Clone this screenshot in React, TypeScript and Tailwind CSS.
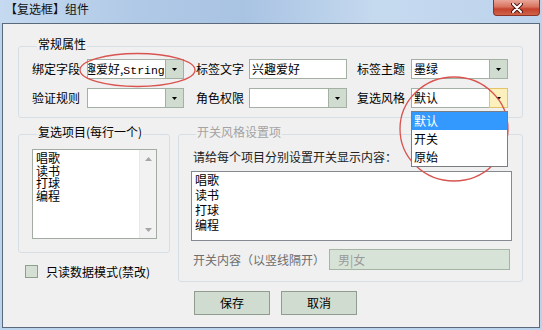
import type { ReactNode } from "react";

const cjk = "font-['Noto_Sans_CJK_SC',sans-serif]";

function DownArrow() {
  return (
    <svg width="5" height="3" viewBox="0 0 5 3">
      <path d="M0 0h5L2.5 3z" fill="#000" />
    </svg>
  );
}

function ScrollArrow({ up }: { up?: boolean }) {
  return (
    <svg width="7" height="4" viewBox="0 0 7 4">
      <path d={up ? "M0 4h7L3.5 0z" : "M0 0h7L3.5 4z"} fill="#a6a6a6" />
    </svg>
  );
}

function Combo({
  value,
  width = "w-[97px]",
  hot,
  children,
}: {
  value?: ReactNode;
  width?: string;
  hot?: boolean;
  children?: ReactNode;
}) {
  return (
    <div className={`relative flex h-[20px] ${width} border border-[#a3b0a3] bg-white`}>
      <div className="flex flex-1 overflow-hidden whitespace-nowrap leading-[18px]">
        <span className="pl-[2px]">{value}</span>
      </div>
      <div
        className={
          hot
            ? "-my-[1px] -mr-[1px] flex w-[19px] items-center justify-center border border-[#e4c468] bg-[#fcf0bd]"
            : "flex w-[18px] items-center justify-center border-l border-[#a3b0a3] bg-[#cfdccf]"
        }
      >
        <DownArrow />
      </div>
      {children}
    </div>
  );
}

function Legend({ children, muted }: { children: ReactNode; muted?: boolean }) {
  return (
    <legend className={`ml-[5px] px-[1px] pb-[4px] leading-[12px] ${muted ? "text-[#a3a3a3]" : ""}`}>
      {children}
    </legend>
  );
}

export default function App() {
  return (
    <div className={`relative h-[330px] w-[542px] overflow-hidden bg-[#bcd3ec] text-[12px] text-black ${cjk}`}>
      {/* title bar */}
      <div className="flex h-[23px] items-start bg-[linear-gradient(90deg,#c5daf0_0%,#b0c9e6_25%,#a9c3e3_45%,#c6daef_70%,#bcd3ec_100%)]">
        <span className="pl-[5px] pt-[1px] leading-[16px] text-[#111]">【复选框】组件</span>
        <div className="ml-auto mr-[2px] flex h-[16px] w-[47px] items-center justify-center rounded-b-[4px] border border-t-0 border-[#8b3326] bg-[linear-gradient(180deg,#e9a699_0%,#d9735f_45%,#c4422d_60%,#d0644a_100%)]">
          <svg width="12" height="10" viewBox="0 0 12 10">
            <path d="M2 1l8 8M10 1l-8 8" stroke="#4a1610" strokeWidth="4" strokeLinecap="round" />
            <path d="M2 1l8 8M10 1l-8 8" stroke="#fff" strokeWidth="2" strokeLinecap="round" />
          </svg>
        </div>
      </div>

      {/* client */}
      <div className="ml-[2px] h-[305px] w-[538px] border border-[#5b6a7a] bg-[#f0f0f0]">
        {/* 常规属性 */}
        <fieldset className="ml-[15px] mt-[14px] w-[505px] rounded-[3px] border border-[#d5dfe5] pb-[9px] pl-[13px] pt-[5px]">
          <Legend>常规属性</Legend>
          <div className="flex h-[20px] items-center">
            <span className="w-[55px]">绑定字段</span>
            <Combo
              value={
                <span className="ml-[-18px]">
                  兴趣爱好,<span className="font-['Liberation_Mono',monospace] text-[11.5px]">String</span>
                </span>
              }
            />
            <span className="ml-[12px] w-[53px]">标签文字</span>
            <div className="h-[20px] w-[98px] border border-[#a3b0a3] bg-white pl-[2px] leading-[18px]">兴趣爱好</div>
            <span className="ml-[10px] w-[54px]">标签主题</span>
            <Combo value="墨绿" />
          </div>
          <div className="mt-[9px] flex h-[20px] items-center">
            <span className="w-[55px]">验证规则</span>
            <Combo />
            <span className="ml-[12px] w-[53px]">角色权限</span>
            <Combo width="w-[98px]" />
            <span className="ml-[10px] w-[54px]">复选风格</span>
            <Combo value="默认" hot>
              <div className="absolute left-[-1px] top-[22px] z-10 w-[97px] border border-[#7a7d82] bg-white">
                <div className="h-[18px] bg-[#3399ff] pl-[2px] leading-[18px] text-white">默认</div>
                <div className="h-[18px] pl-[2px] leading-[18px]">开关</div>
                <div className="h-[18px] pl-[2px] leading-[18px]">原始</div>
              </div>
            </Combo>
          </div>
        </fieldset>

        <div className="mt-[8px] flex items-start pl-[15px]">
          {/* left column */}
          <div className="w-[152px]">
            <fieldset className="rounded-[3px] border border-[#d5dfe5] pb-[13px] pl-[13px] pt-[7px]">
              <Legend>复选项目(每行一个)</Legend>
              <div className="flex h-[90px] w-[125px] border border-[#a3aca3] bg-white">
                <div className="flex-1 pl-[3px] pt-[2px] leading-[12.5px]">
                  <div>唱歌</div>
                  <div>读书</div>
                  <div>打球</div>
                  <div>编程</div>
                </div>
                <div className="flex w-[17px] flex-col justify-between border-l border-[#e8e8e8] bg-[#f2f2f2]">
                  <div className="flex h-[17px] items-center justify-center">
                    <ScrollArrow up />
                  </div>
                  <div className="flex h-[17px] items-center justify-center">
                    <ScrollArrow />
                  </div>
                </div>
              </div>
            </fieldset>
            <div className="mt-[12px] flex items-center pl-[7px]">
              <div className="h-[13px] w-[13px] border border-[#8f9f8f] bg-[#d4e0d4]" />
              <span className="ml-[8px] leading-[13px]">只读数据模式(禁改)</span>
            </div>
          </div>

          {/* right column */}
          <fieldset className="ml-[8px] w-[345px] rounded-[3px] border border-[#d5dfe5] pb-[11px] pl-[12px] pt-[7px]">
            <Legend muted>开关风格设置项</Legend>
            <div className="ml-[2px] leading-[16px] text-[#222]">请给每个项目分别设置开关显示内容：</div>
            <div className="mt-[6px] h-[70px] w-[321px] border border-[#858a92] bg-white pl-[3px] leading-[15px]">
              <div>唱歌</div>
              <div>读书</div>
              <div>打球</div>
              <div>编程</div>
            </div>
            <div className="mt-[8px] flex h-[21px] items-center">
              <span className="ml-[2px] w-[136px] text-[#6d6d6d]">开关内容（以竖线隔开）</span>
              <div className="h-[21px] w-[181px] border border-[#a6b4a6] bg-[#d8e3d8] pl-[8px] leading-[19px] text-[#9a9a9a]">
                男|女
              </div>
            </div>
          </fieldset>
        </div>

        <div className="ml-[191px] mt-[9px] flex gap-[11px]">
          <button className="h-[24px] w-[76px] border border-[#8f9c8f] bg-[#cfdccf] leading-[22px]">保存</button>
          <button className="h-[24px] w-[76px] border border-[#8f9c8f] bg-[#cfdccf] leading-[22px]">取消</button>
        </div>
      </div>

      {/* red annotation circles */}
      <svg className="pointer-events-none absolute left-0 top-0" width="542" height="330">
        <ellipse cx="137.5" cy="70" rx="57.5" ry="16.5" fill="none" stroke="#d9534f" strokeWidth="1.3" />
        <ellipse cx="454" cy="129" rx="54" ry="52" fill="none" stroke="#d9534f" strokeWidth="1.3" />
      </svg>
    </div>
  );
}
